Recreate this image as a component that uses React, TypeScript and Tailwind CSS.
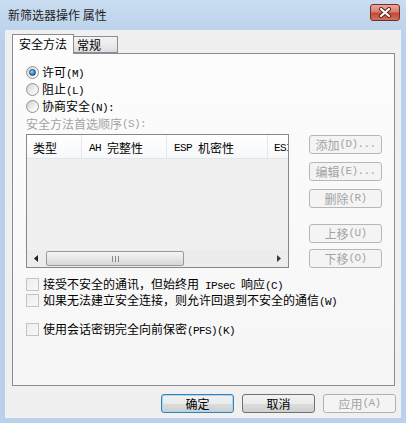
import type { ReactNode } from "react";

const M = ({ children }: { children: ReactNode }) => (
  <span className="font-['Liberation_Mono',monospace] text-[11px] tracking-[-0.6px]">{children}</span>
);

function Radio({ checked }: { checked?: boolean }) {
  return (
    <span className="w-[13px] h-[13px] shrink-0 rounded-full border border-[#929292] bg-[linear-gradient(135deg,#cfcfcf,#f7f7f7_70%,#ffffff)] flex items-center justify-center">
      {checked && (
        <span className="w-[7px] h-[7px] rounded-full border border-[#1b4f7a] bg-[radial-gradient(circle_at_35%_35%,#a8dcff,#2f86c8_55%,#0f4a7c)]" />
      )}
    </span>
  );
}

function Check() {
  return (
    <span className="w-[13px] h-[13px] shrink-0 border border-[#c2c4c6] bg-[linear-gradient(135deg,#eeeeee,#f8f8f8)]" />
  );
}

function SideButton({ children, className = "" }: { children: ReactNode; className?: string }) {
  return (
    <div
      className={`h-[19px] w-[73px] rounded-[3px] border border-[#b4b8bb] bg-[#f4f4f4] flex items-center justify-center text-[#a3a3a3] ${className}`}
    >
      {children}
    </div>
  );
}

const columns = [
  { w: "w-[55px]", label: "类型", pl: "pl-[6px]" },
  { w: "w-[85px]", label: <><M>{"AH\u00a0"}</M>完整性</>, pl: "pl-[7px]" },
  { w: "w-[101px]", label: <><M>{"ESP\u00a0"}</M>机密性</>, pl: "pl-[7px]" },
  { w: "flex-1", label: <M>ESI</M>, pl: "pl-[6px]" },
];

export default function App() {
  return (
    <div className="w-[406px] h-[423px] overflow-hidden bg-[linear-gradient(to_bottom,#c9dcf0,#b9d1ea_40px)] flex flex-col px-[5px] pb-[5px] font-['Noto_Sans_CJK_SC',sans-serif] text-[12px] text-black leading-none">
      {/* Title bar */}
      <div className="h-[30px] flex items-center justify-between">
        <span className="pl-[3px] text-[#1e1e1e]">新筛选器操作 属性</span>
        <div className="mr-[1px] mb-[5px] w-[30px] h-[17px] rounded-[3px] border border-[#7a2a22] bg-[linear-gradient(to_bottom,#e9a99c,#d47f6e_45%,#c24a36_55%,#d2705c)] flex items-center justify-center">
          <svg width="14" height="11" viewBox="0 0 14 11">
            <path d="M3 2 L11 9 M11 2 L3 9" stroke="#5a1f18" strokeWidth="4" strokeLinecap="round" />
            <path d="M3 2 L11 9 M11 2 L3 9" stroke="#ffffff" strokeWidth="2.2" strokeLinecap="round" />
          </svg>
        </div>
      </div>

      {/* Client area */}
      <div className="flex-1 bg-[#f0f0f0] flex flex-col">
        {/* Tabs */}
        <div className="h-[23px] pt-[3px] pl-[7px] flex items-end relative z-10">
          <div className="h-[20px] w-[62px] border border-b-0 border-[#898c95] bg-[#fcfcfc] pl-[6px] flex items-center -mb-[1px] pb-[1px]">
            安全方法
          </div>
          <div className="h-[17px] w-[44px] border border-l-0 border-[#898c95] bg-[linear-gradient(to_bottom,#f3f3f3,#ebebeb_50%,#dcdcdc)] pl-[3px] flex items-center">
            常规
          </div>
        </div>

        {/* Panel */}
        <div className="h-[333px] ml-[7px] mr-[6px] border border-[#898c95] bg-[linear-gradient(to_bottom,#fcfcfc,#f6f6f6)] pl-[13px] flex flex-col">
          <div className="mt-[10px] h-[17px] flex items-center gap-[3px]">
            <Radio checked />
            <span>许可<M>(M)</M></span>
          </div>
          <div className="h-[17px] flex items-center gap-[3px]">
            <Radio />
            <span>阻止<M>(L)</M></span>
          </div>
          <div className="h-[17px] flex items-center gap-[3px]">
            <Radio />
            <span>协商安全<M>(N):</M></span>
          </div>
          <div className="h-[18px] flex items-center text-[#a3a3a3]">
            安全方法首选顺序<M>(S):</M>
          </div>

          <div className="mt-[1px] flex">
            {/* List view */}
            <div className="w-[263px] h-[134px] border border-[#828790] bg-[#f0f0f0] flex flex-col">
              <div className="h-[24px] flex bg-[linear-gradient(to_bottom,#ffffff,#f7f8fa)] border-b border-[#e3e6ea]">
                {columns.map((c, i) => (
                  <div
                    key={i}
                    className={`${c.w} ${c.pl} h-full flex items-center pt-[3px] whitespace-nowrap overflow-hidden ${i < 3 ? "border-r border-[#e3e6ea]" : ""}`}
                  >
                    {c.label}
                  </div>
                ))}
              </div>
              <div className="flex-1" />
              {/* Horizontal scrollbar */}
              <div className="h-[17px] flex items-center bg-[#ececec]">
                <div className="w-[18px] h-full flex items-center justify-center">
                  <svg width="4" height="7" viewBox="0 0 4 7">
                    <path d="M4 0 L0 3.5 L4 7 Z" fill="#1e1e1e" />
                  </svg>
                </div>
                <div className="ml-[1px] w-[138px] h-[15px] rounded-[2px] border border-[#9a9a9a] bg-[linear-gradient(to_bottom,#f5f5f5,#e6e6e6_50%,#d7d7d7)] flex items-center justify-center gap-[2px]">
                  <span className="w-[1px] h-[6px] bg-[#8a8a8a]" />
                  <span className="w-[1px] h-[6px] bg-[#8a8a8a]" />
                  <span className="w-[1px] h-[6px] bg-[#8a8a8a]" />
                </div>
                <div className="flex-1" />
                <div className="w-[18px] h-full flex items-center justify-center">
                  <svg width="4" height="7" viewBox="0 0 4 7">
                    <path d="M0 0 L4 3.5 L0 7 Z" fill="#3a3a3a" />
                  </svg>
                </div>
              </div>
            </div>

            {/* Side buttons */}
            <div className="ml-[20px] mt-[1px] flex flex-col">
              <SideButton>添加<M>(D)...</M></SideButton>
              <SideButton className="mt-[8px]">编辑<M>(E)...</M></SideButton>
              <SideButton className="mt-[8px]">删除<M>(R)</M></SideButton>
              <SideButton className="mt-[16px]">上移<M>(U)</M></SideButton>
              <SideButton className="mt-[6px]">下移<M>(O)</M></SideButton>
            </div>
          </div>

          <div className="mt-[10px] h-[13px] flex items-center gap-[4px]">
            <Check />
            <span className="whitespace-nowrap">接受不安全的通讯，但始终用<M>{"\u00a0IPsec\u00a0"}</M>响应<M>(C)</M></span>
          </div>
          <div className="mt-[3px] h-[13px] flex items-center gap-[4px]">
            <Check />
            <span className="whitespace-nowrap">如果无法建立安全连接，则允许回退到不安全的通信<M>(W)</M></span>
          </div>
          <div className="mt-[16px] h-[13px] flex items-center gap-[4px]">
            <Check />
            <span className="whitespace-nowrap">使用会话密钥完全向前保密<M>(PFS)(K)</M></span>
          </div>
        </div>

        {/* Dialog buttons */}
        <div className="mt-[8px] mr-[5px] flex justify-end gap-[8px]">
          <div className="w-[73px] h-[19px] rounded-[3px] border border-[#3c7fb1] shadow-[inset_0_0_0_1px_#a6d8f5] bg-[linear-gradient(to_bottom,#f2f2f2,#ebebeb_50%,#dddddd_50%,#cfcfcf)] flex items-center justify-center">
            确定
          </div>
          <div className="w-[73px] h-[19px] rounded-[3px] border border-[#707070] bg-[linear-gradient(to_bottom,#f2f2f2,#ebebeb_50%,#dddddd_50%,#cfcfcf)] flex items-center justify-center">
            取消
          </div>
          <div className="w-[73px] h-[19px] rounded-[3px] border border-[#adb2b5] bg-[#f4f4f4] flex items-center justify-center text-[#a3a3a3]">
            应用<M>(A)</M>
          </div>
        </div>
      </div>
    </div>
  );
}
